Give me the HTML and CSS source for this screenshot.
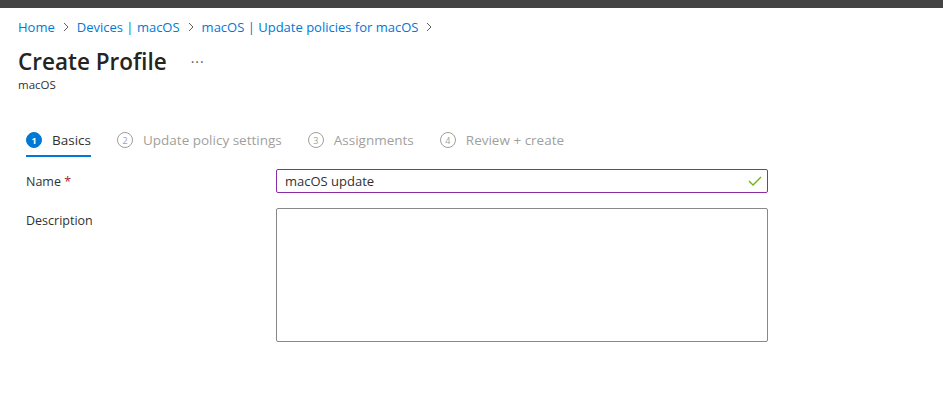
FILE: index.html
```html
<!DOCTYPE html>
<html lang="en">
<head>
    <meta charset="UTF-8">
    <title>Create Profile</title>
    <link rel="stylesheet" href="styles.css">
</head>
<body>
    <div class="topbar"></div>
    <div class="page">
        <nav class="breadcrumb">
            <a href="#">Home</a>
            <span class="chevron"><svg width="8" height="10" viewBox="0 0 8 10"><path d="M2 1 L6 5 L2 9" fill="none" stroke="#605e5c" stroke-width="1"/></svg></span>
            <a href="#">Devices | macOS</a>
            <span class="chevron"><svg width="8" height="10" viewBox="0 0 8 10"><path d="M2 1 L6 5 L2 9" fill="none" stroke="#605e5c" stroke-width="1"/></svg></span>
            <a href="#">macOS | Update policies for macOS</a>
            <span class="chevron"><svg width="8" height="10" viewBox="0 0 8 10"><path d="M2 1 L6 5 L2 9" fill="none" stroke="#605e5c" stroke-width="1"/></svg></span>
        </nav>

        <div class="title-row">
            <h1>Create Profile</h1>
            <button class="more">···</button>
        </div>
        <div class="subtitle">macOS</div>

        <div class="tabs">
            <div class="tab active"><span class="step">1</span>Basics</div>
            <div class="tab"><span class="step">2</span>Update policy settings</div>
            <div class="tab"><span class="step">3</span>Assignments</div>
            <div class="tab"><span class="step">4</span>Review + create</div>
        </div>

        <div class="form">
            <div class="form-row">
                <label class="label">Name <span class="required">*</span></label>
                <div class="input-wrap">
                    <input type="text" class="input-field" value="macOS update">
                    <svg class="check" width="14" height="10" viewBox="0 0 14 10"><path d="M1 5 L5 9 L13 1" fill="none" stroke="#6bb700" stroke-width="1.3"/></svg>
                </div>
            </div>
            <div class="form-row">
                <label class="label">Description</label>
                <textarea class="textarea"></textarea>
            </div>
        </div>
    </div>
</body>
</html>
```

FILE: styles.css
```css
* {
    margin: 0;
    padding: 0;
    box-sizing: border-box;
    font-family: "Open Sans", "Noto Sans", sans-serif;
}

body {
    background-color: white;
    color: #323130;
}

.topbar {
    height: 8px;
    background-color: #444444;
}

.page {
    padding: 0 18px;
}

.breadcrumb {
    display: flex;
    align-items: center;
    gap: 7px;
    margin-top: 9px;
    height: 20px;
    font-size: 13px;
}

.breadcrumb a {
    color: #0078d4;
    text-decoration: none;
}

.chevron {
    display: flex;
    align-items: center;
}

.title-row {
    display: flex;
    align-items: center;
    gap: 24px;
    margin-top: 8px;
    height: 32px;
}

h1 {
    font-size: 22.5px;
    font-weight: 600;
    color: #252423;
}

.more {
    background: none;
    border: none;
    color: #605e5c;
    font-size: 14px;
    letter-spacing: 1px;
}

.subtitle {
    font-size: 11.5px;
    line-height: 16px;
    color: #323130;
}

.tabs {
    display: flex;
    gap: 26px;
    margin: 37px 0 0 8px;
}

.tab {
    display: flex;
    align-items: center;
    gap: 10px;
    font-size: 13.5px;
    line-height: 20px;
    color: #a19f9d;
    padding-bottom: 5px;
    border-bottom: 2px solid transparent;
}

.tab.active {
    color: #323130;
    border-bottom-color: #0078d4;
}

.step {
    display: flex;
    align-items: center;
    justify-content: center;
    width: 16px;
    height: 16px;
    border: 1px solid #a19f9d;
    border-radius: 50%;
    font-size: 9px;
    line-height: 1;
}

.tab.active .step {
    background-color: #0078d4;
    border-color: #0078d4;
    color: white;
    font-weight: 700;
}

.form {
    margin: 12px 0 0 8px;
}

.form-row {
    display: flex;
    margin-bottom: 15px;
}

.label {
    width: 250px;
    padding-top: 2px;
    font-size: 12.5px;
    line-height: 22px;
    color: #323130;
}

.required {
    color: #a4262c;
}

.input-wrap {
    position: relative;
    width: 492px;
}

.input-field {
    width: 100%;
    height: 24px;
    border: 1px solid #8a2da5;
    border-radius: 2px;
    padding: 0 8px;
    font-size: 13px;
    color: #323130;
    outline: none;
}

.check {
    position: absolute;
    right: 6px;
    top: 7px;
}

.textarea {
    width: 492px;
    height: 134px;
    border: 1px solid #8a8886;
    border-radius: 2px;
    resize: none;
}
```
